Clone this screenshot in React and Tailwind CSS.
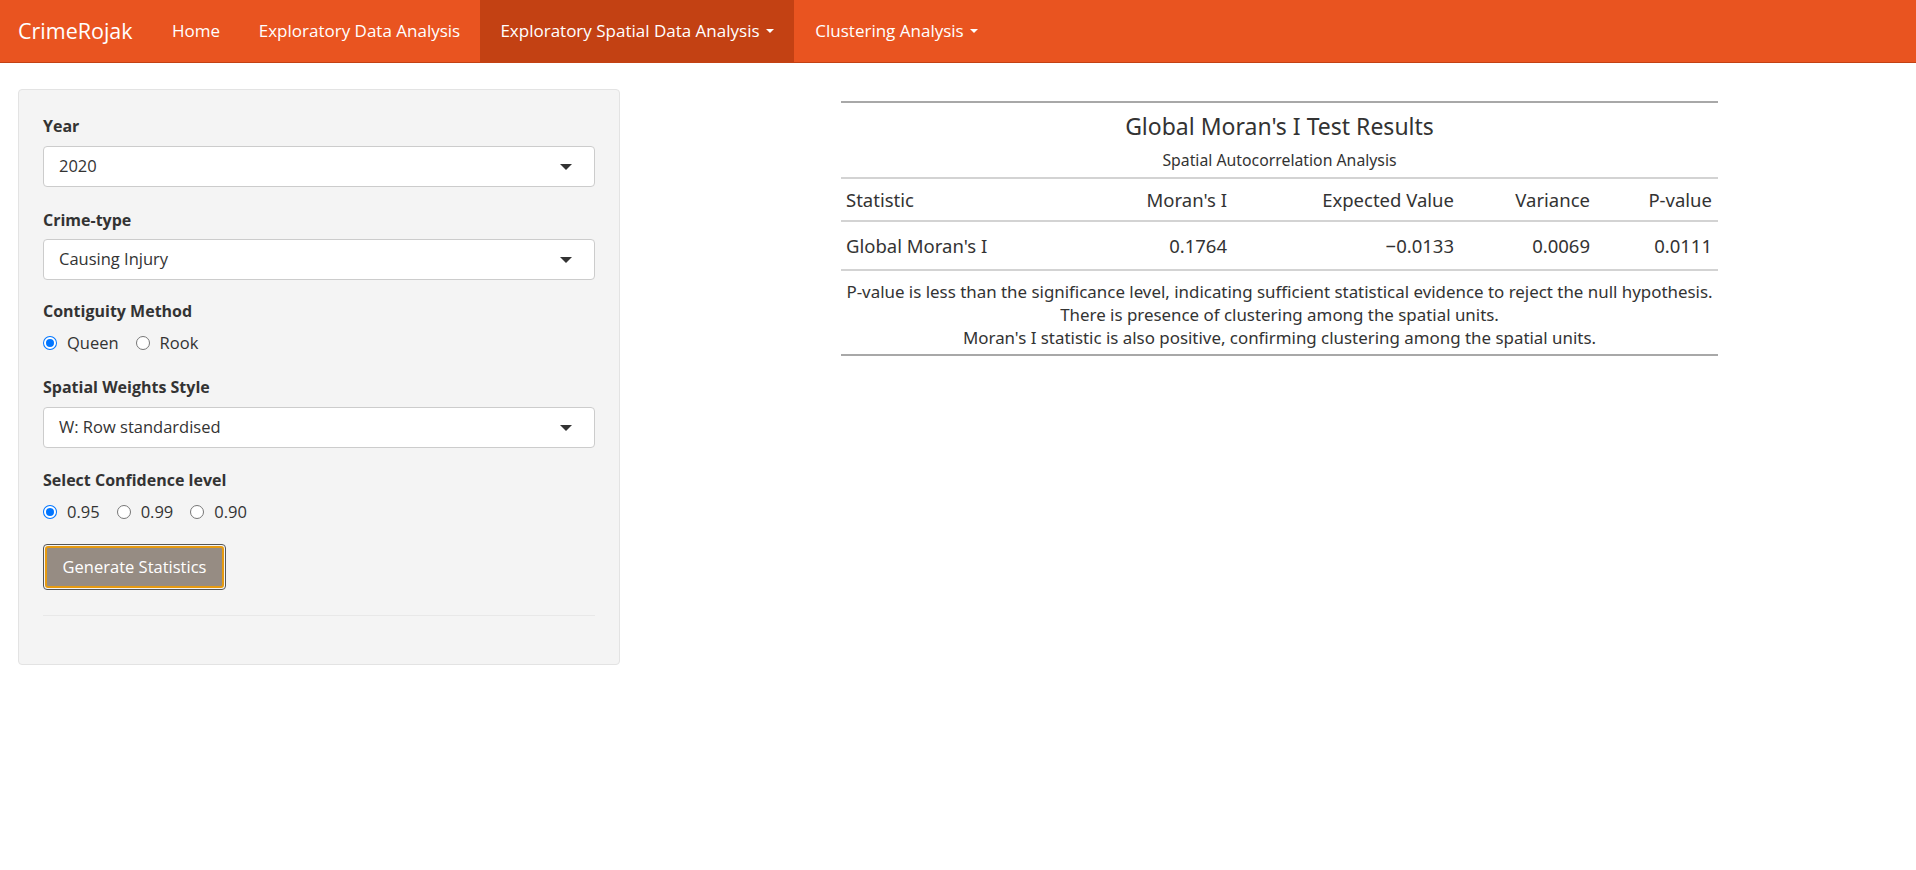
import React from "react";

const ubuntu = { fontFamily: '"Open Sans", "Noto Sans", sans-serif' };

function Caret() {
  return (
    <span className="inline-block ml-[6px] align-middle w-0 h-0 border-l-[4px] border-r-[4px] border-t-[4px] border-l-transparent border-r-transparent border-t-white" />
  );
}

function Select({ value }) {
  return (
    <div className="h-[41px] w-full bg-white border border-[#cccccc] rounded-[4px] flex items-center justify-between pl-[15px] pr-[22px] text-[16.5px] text-[#333333]">
      <span>{value}</span>
      <span className="w-0 h-0 border-l-[6px] border-r-[6px] border-t-[6px] border-l-transparent border-r-transparent border-t-[#333333]" />
    </div>
  );
}

function Radio({ checked, label }) {
  return (
    <div className="flex items-center gap-[10px]">
      {checked ? (
        <span className="w-[14px] h-[14px] rounded-full bg-[#0075ff] flex items-center justify-center">
          <span className="w-[8px] h-[8px] rounded-full bg-[#0075ff] border-[2px] border-white box-content" />
        </span>
      ) : (
        <span className="w-[14px] h-[14px] rounded-full border border-[#767676] bg-white" />
      )}
      <span className="text-[16.5px] text-[#333333] leading-[20px]">{label}</span>
    </div>
  );
}

function Label({ children }) {
  return <div className="text-[16px] font-bold text-[#333333] leading-[20px]">{children}</div>;
}

export default function App() {
  return (
    <div className="min-h-[870px] bg-white" style={ubuntu}>
      <nav className="h-[63px] bg-[#e95420] border-b border-[#c34113] flex items-stretch text-white">
        <div className="w-[153px] pl-[18px] flex items-center text-[21.5px]">CrimeRojak</div>
        <div className="w-[86px] flex items-center justify-center text-[17px]">Home</div>
        <div className="w-[241px] flex items-center justify-center text-[17px]">Exploratory Data Analysis</div>
        <div className="w-[314px] flex items-center justify-center text-[17px] bg-[#c34113]">
          Exploratory Spatial Data Analysis<Caret />
        </div>
        <div className="w-[205px] flex items-center justify-center text-[17px]">
          Clustering Analysis<Caret />
        </div>
      </nav>

      <div className="flex items-start">
        <div className="ml-[18px] mt-[26px] w-[602px] h-[576px] bg-[#f4f4f4] border border-[#e3e3e3] rounded-[4px] pt-[26px] px-[24px]">
          <Label>Year</Label>
          <div className="mt-[10px]"><Select value="2020" /></div>
          <div className="mt-[23px]"><Label>Crime-type</Label></div>
          <div className="mt-[9px]"><Select value="Causing Injury" /></div>
          <div className="mt-[21px]"><Label>Contiguity Method</Label></div>
          <div className="mt-[12px] flex items-center gap-[17px]">
            <Radio checked label="Queen" />
            <Radio label="Rook" />
          </div>
          <div className="mt-[24px]"><Label>Spatial Weights Style</Label></div>
          <div className="mt-[10px]"><Select value="W: Row standardised" /></div>
          <div className="mt-[22px]"><Label>Select Confidence level</Label></div>
          <div className="mt-[12px] flex items-center gap-[17px]">
            <Radio checked label="0.95" />
            <Radio label="0.99" />
            <Radio label="0.90" />
          </div>
          <div className="mt-[22px] w-[183px] h-[46px] rounded-[4px] border border-[#555555] p-[1px]">
            <div className="w-full h-full rounded-[3px] border-[2px] border-[#e69a10] bg-[#968c83] flex items-center justify-center text-white text-[16.5px]">
              Generate Statistics
            </div>
          </div>
          <div className="mt-[25px] border-t border-[#e8e8e8]" />
        </div>

        <div className="flex-1 flex justify-center pt-[38px] pl-[23px]">
          <div
            className="w-[877px] text-[#333333]"
            style={{ fontFamily: '"Noto Sans", "Open Sans", sans-serif' }}
          >
            <div className="border-t-[2px] border-[#a8a8a8] border-b-[2px] border-b-[#d3d3d3] text-center pt-[10px] pb-[7px]">
              <div className="text-[23px] leading-[26px]">Global Moran's I Test Results</div>
              <div className="mt-[11px] text-[15.8px] leading-[20px]">Spatial Autocorrelation Analysis</div>
            </div>
            <div className="grid grid-cols-[259px_132px_227px_136px_123px] h-[43px] items-center border-b-[2px] border-[#d3d3d3] text-[18.5px]">
              <div className="pl-[5px]">Statistic</div>
              <div className="text-right pr-[5px]">Moran's I</div>
              <div className="text-right pr-[5px]">Expected Value</div>
              <div className="text-right pr-[5px]">Variance</div>
              <div className="text-right pr-[6px]">P-value</div>
            </div>
            <div className="grid grid-cols-[259px_132px_227px_136px_123px] h-[49px] items-center border-b-[2px] border-[#d3d3d3] text-[18.5px]">
              <div className="pl-[5px]">Global Moran's I</div>
              <div className="text-right pr-[5px]">0.1764</div>
              <div className="text-right pr-[5px]">−0.0133</div>
              <div className="text-right pr-[5px]">0.0069</div>
              <div className="text-right pr-[6px]">0.0111</div>
            </div>
            <div className="border-b-[2px] border-[#a8a8a8] text-center text-[16.9px] leading-[23px] pt-[9px] pb-[5px]">
              <div>P-value is less than the significance level, indicating sufficient statistical evidence to reject the null hypothesis.</div>
              <div>There is presence of clustering among the spatial units.</div>
              <div>Moran's I statistic is also positive, confirming clustering among the spatial units.</div>
            </div>
          </div>
        </div>
      </div>
    </div>
  );
}
